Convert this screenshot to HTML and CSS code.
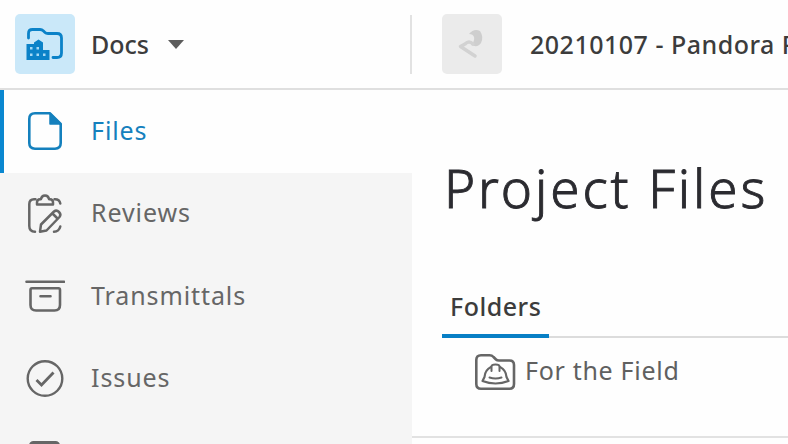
FILE: index.html
```html
<!DOCTYPE html>
<html lang="en">
<head>
    <meta charset="UTF-8">
    <meta name="viewport" content="width=device-width, initial-scale=1.0">
    <title>Docs - Project Files</title>
    <link rel="stylesheet" href="styles.css">
</head>
<body>
    <header class="header">
        <div class="product">
            <div class="product-logo">
                <svg width="40" height="36" viewBox="0 0 40 36" fill="none">
                    <path d="M3.500 12V7.500Q3.500 3.500 7.500 3.500H15Q17 3.500 18.500 5L20 6.500Q21 7.500 23 7.500H32Q36.500 7.500 36.500 12V27Q36.500 31.500 32 31.500H28" stroke="#0b82c8" stroke-width="2.800" stroke-linecap="round"/>
                    <path d="M1.500 34V18H9V16.500L13.500 13.500L18 16.500V24H24.500V34Z" fill="#0b82c8"/>
                    <path d="M5 21h2.500v2.500h-2.500zM11.500 21h2.500v2.500h-2.500zM5 27.500h2.500v2.500h-2.500zM11.500 27.500h2.500v2.500h-2.500zM18 27.500h2.500v2.500h-2.500z" fill="#a6d9f5"/>
                </svg>
            </div>
            <span class="product-name">Docs</span>
            <svg class="caret" width="16" height="9" viewBox="0 0 16 9"><path d="M0 0H16L8 9Z" fill="#5c5c5c"/></svg>
        </div>
        <div class="project">
            <div class="project-logo">
                <svg width="30" height="36" viewBox="0 0 30 36" fill="none">
                    <path d="M12 8Q17 2 23 5Q27 11 24 17Q21 22 14 19Q18 15 17 11Q16 8 12 8Z" fill="#cecece"/>
                    <path d="M16 18Q12 14 8 18L3.500 20.500L18 30" stroke="#d2d2d2" stroke-width="3.500" stroke-linecap="round" stroke-linejoin="round"/>
                </svg>
            </div>
            <span class="project-name">20210107 - Pandora P</span>
        </div>
    </header>

    <div class="container">
        <nav class="sidebar">
            <a class="nav-item active">
                <svg class="nav-icon" viewBox="0 0 42 42" fill="none" stroke="currentColor" stroke-width="2.600" stroke-linejoin="round">
                    <path d="M27 3.300H12Q6.300 3.300 6.300 9V33Q6.300 38.700 12 38.700H32Q37.700 38.700 37.700 33V14Z"/>
                    <path d="M27 3.300V14H37.700Z" fill="currentColor" stroke-width="1.500"/>
                </svg>
                <span>Files</span>
            </a>
            <a class="nav-item">
                <svg class="nav-icon" viewBox="0 0 42 42" fill="none" stroke="currentColor" stroke-width="2.500" stroke-linecap="round" stroke-linejoin="round">
                    <path d="M12.500 6.200H11Q6.300 6.200 6.300 11V33Q6.300 38.700 12 38.700M31.500 6.200H32Q36.500 6.200 37.300 10.500M31 38.700Q36 38.700 37.300 33.500"/>
                    <path d="M14 11.500V9.500Q14 6.200 17 6.200H18Q18.500 2.500 22 2.500T26 6.200H27Q30 6.200 30 9.500V11.500Z"/>
                    <path d="M17 38.700L18 31.500L31 18.500Q33.500 16.500 36 19Q38.500 21.500 36.500 24L23.500 37.500ZM29.500 20.500L34.500 25.500"/>
                </svg>
                <span>Reviews</span>
            </a>
            <a class="nav-item">
                <svg class="nav-icon" viewBox="0 0 42 42" fill="none" stroke="currentColor" stroke-width="2.600" stroke-linecap="round">
                    <path d="M3.500 6.800H41M17.500 21.300H27.500"/>
                    <path d="M9 13.300H35.500Q37 13.300 37 15V30Q37 35.500 31.500 35.500H13Q7.500 35.500 7.500 30V15Q7.500 13.300 9 13.300Z"/>
                </svg>
                <span>Transmittals</span>
            </a>
            <a class="nav-item">
                <svg class="nav-icon" viewBox="0 0 42 42" fill="none" stroke="currentColor" stroke-width="2.400">
                    <circle cx="22" cy="20.500" r="17.300"/>
                    <path d="M13.500 22L18.500 27L30.500 14.500" stroke-width="2.800"/>
                </svg>
                <span>Issues</span>
            </a>
            <a class="nav-item">
                <svg class="nav-icon" viewBox="0 0 42 42" fill="none" stroke="currentColor" stroke-width="3">
                    <rect x="7.500" y="2.500" width="28" height="36" rx="3"/>
                </svg>
            </a>
        </nav>

        <main class="content">
            <h1>Project Files</h1>
            <div class="tabs">
                <div class="tab">Folders</div>
            </div>
            <div class="folder-row">
                <svg width="42" height="38" viewBox="0 0 42 38" fill="none" stroke="#666" stroke-width="2.600" stroke-linecap="round" stroke-linejoin="round">
                    <path d="M7 2.300H15.500Q18 2.300 19.500 4L22 6.500Q23 7.500 25 7.500H35.500Q40 7.500 40 12V31Q40 35.700 35.500 35.700H7Q2.300 35.700 2.300 31V7Q2.300 2.300 7 2.300Z"/>
                    <path d="M17 14Q11 17 10.500 24L8.500 28Q21.500 33 34.500 28L32.500 24Q32 17 26 14" stroke-width="2.200"/>
                    <path d="M17.500 18V13.500Q17.500 11.500 21.500 11.500T25.500 13.500V18M15.500 24.500Q21.500 26.500 27.500 24.500" stroke-width="2"/>
                </svg>
                <span class="folder-name">For the Field</span>
            </div>
        </main>
    </div>
</body>
</html>
```

FILE: styles.css
```css
* {
    box-sizing: border-box;
    margin: 0;
    padding: 0;
}

body {
    font-family: "Noto Sans", "Open Sans", sans-serif;
    font-size: 25px;
    height: 444px;
    overflow: hidden;
    background-color: #fefefe;
    color: #3c3c3c;
}

.header {
    display: flex;
    align-items: center;
    height: 90px;
    border-bottom: 2px solid #dfdfdf;
    white-space: nowrap;
}

.product {
    display: flex;
    flex-shrink: 0;
    align-items: center;
    width: 412px;
    height: 59px;
    padding-left: 15px;
    border-right: 2px solid #e2e2e2;
}

.product-logo,
.project-logo {
    display: flex;
    flex-shrink: 0;
    align-items: center;
    justify-content: center;
    width: 60px;
    height: 60px;
    border-radius: 5px;
    background-color: #cae8f9;
}

.product-name {
    margin-left: 16px;
    font-weight: 500;
}

.caret {
    margin-left: 19px;
}

.project {
    display: flex;
    flex: 1;
    align-items: center;
    min-width: 0;
    padding-left: 30px;
    overflow: hidden;
}

.project-logo {
    background-color: #ebebeb;
}

.project-name {
    margin-left: 28px;
    font-weight: 500;
    letter-spacing: 0.5px;
}

.container {
    display: flex;
    height: 354px;
    overflow: hidden;
}

.sidebar {
    flex-shrink: 0;
    width: 412px;
    background-color: #f5f5f5;
}

.nav-item {
    display: flex;
    align-items: center;
    height: 82.5px;
    padding-left: 23px;
    letter-spacing: 0.9px;
    color: #666;
}

.nav-item span {
    padding-bottom: 3px;
}

.nav-item.active {
    padding-left: 19px;
    border-left: 4px solid #0a87d0;
    background-color: #fefefe;
    color: #1480bd;
}

.nav-icon {
    width: 42px;
    height: 42px;
    margin-right: 26px;
}

.content {
    flex: 1;
    min-width: 0;
}

h1 {
    margin: 60px 0 0 32px;
    font-size: 53px;
    font-weight: 300;
    line-height: 76px;
    letter-spacing: 2.9px;
    white-space: nowrap;
    color: #2b2b30;
    -webkit-text-stroke: 0.9px #2b2b30;
}

.tabs {
    display: flex;
    height: 61px;
    margin: 51px 0 0 30px;
    border-bottom: 2px solid #dcdcdc;
}

.tab {
    width: 107px;
    height: 61px;
    padding-left: 8px;
    border-bottom: 4px solid #087fc5;
    font-weight: 500;
    line-height: 59px;
    letter-spacing: 0.5px;
}

.folder-row {
    display: flex;
    align-items: center;
    height: 100px;
    padding: 0 0 30px 62px;
    border-bottom: 2px solid #e2e2e2;
    color: #606060;
}

.folder-name {
    margin-left: 9px;
    padding-bottom: 4px;
    letter-spacing: 0.7px;
}
```
